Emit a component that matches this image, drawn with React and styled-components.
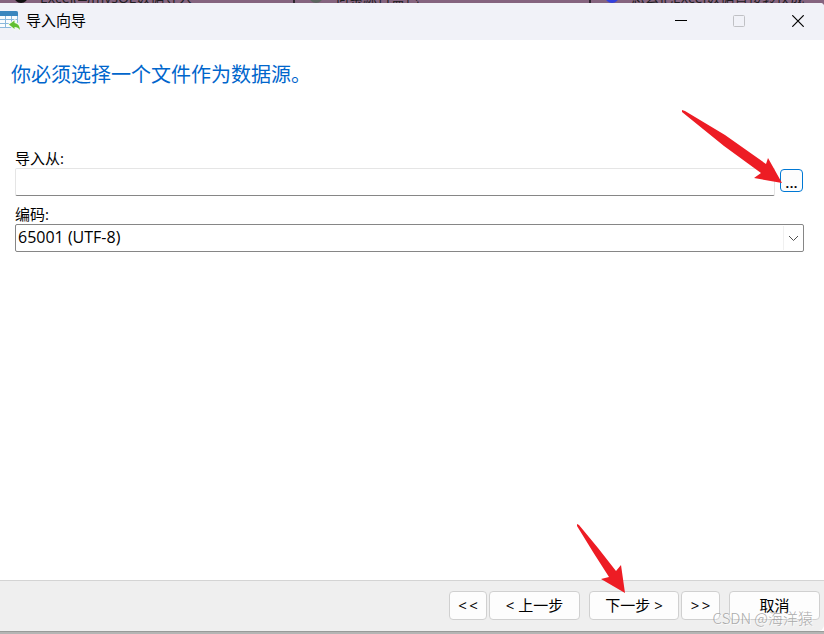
import React, { useState } from 'react';
import styled, { createGlobalStyle } from 'styled-components';

const encodings = ['65001 (UTF-8)', '936 (GBK)', '1200 (UTF-16)', '20127 (US-ASCII)'];

const ImportIcon = () => (
  <svg width="20" height="20" viewBox="0 0 20 20" aria-hidden="true">
    <path d="M0 0h16q2 0 2 2v13q0 2-2 2H0z" fill="#8ab8dc" />
    <path d="M0 0h16q2 0 2 2v3H0z" fill="#3b86be" />
    <path d="M0 5h5v3H0zM6 5h5v3H6zM12 5h5v3h-5zM0 9h5v3H0zM6 9h5v3H6zM12 9h5v3h-5zM0 13h5v3H0zM6 13h5v3H6z" fill="#fafcfe" />
    <path d="M9 13.500L14.500 9.500v2.500q5 0.500 5.500 7-2-3-5.500-3v2z" fill="#62c032" stroke="#f4faf1" strokeWidth="2" paintOrder="stroke" />
  </svg>
);

const ImportWizard = () => {
  const [path, setPath] = useState('');
  const [encoding, setEncoding] = useState(encodings[0]);

  return (
    <S.Page>
      <GlobalStyle />
      <S.TabStrip>
        <S.Tab>
          <S.TabDot $color="#111" />
          Excel(与mysQL数据导入
        </S.Tab>
        <S.Tab>
          <S.TabDot $color="#5d6660" />
          何索綜合藍色
        </S.Tab>
        <S.Tab>
          <S.TabDot $color="#3340dd" />
          怎么把Excel数据直接转换成
        </S.Tab>
      </S.TabStrip>
      <S.Window>
        <S.TitleBar>
          <ImportIcon />
          <S.Title>导入向导</S.Title>
          <S.Control type="button" aria-label="最小化">
            <svg width="12" height="12" viewBox="0 0 12 12">
              <path d="M0 5.500h12" stroke="#000" />
            </svg>
          </S.Control>
          <S.Control type="button" aria-label="最大化" disabled>
            <svg width="12" height="12" viewBox="0 0 12 12">
              <rect x="0.5" y="0.5" width="11" height="11" rx="1" fill="none" stroke="#c0c1c5" />
            </svg>
          </S.Control>
          <S.Control type="button" aria-label="关闭">
            <svg width="12" height="12" viewBox="0 0 12 12">
              <path d="M0.300 0.300l11.400 11.400M11.700 0.300l-11.400 11.400" stroke="#000" strokeWidth="1.200" />
            </svg>
          </S.Control>
        </S.TitleBar>
        <S.Content>
          <S.Heading>你必须选择一个文件作为数据源。</S.Heading>
          <S.Form>
            <S.Label htmlFor="source">导入从:</S.Label>
            <S.FileRow>
              <S.Input id="source" value={path} onChange={(e) => setPath(e.target.value)} />
              <S.Anchor>
                <S.Browse type="button" aria-label="浏览">...</S.Browse>
                <S.BrowseArrow width="104" height="78" viewBox="0 0 104 78" aria-hidden="true">
                  <path d="M2 0L5 1L45 25L86 54L88 48L102 73L74 68L81 63L44 36L2 2z" fill="#ed1c24" />
                </S.BrowseArrow>
              </S.Anchor>
            </S.FileRow>
            <S.Label htmlFor="encoding">编码:</S.Label>
            <S.SelectBox>
              <S.Select id="encoding" value={encoding} onChange={(e) => setEncoding(e.target.value)}>
                {encodings.map((item) => (
                  <option key={item}>{item}</option>
                ))}
              </S.Select>
              <S.Chevron width="20" height="24" viewBox="0 0 20 24" aria-hidden="true">
                <path d="M0.500 0v24" stroke="#f0f0f0" />
                <path d="M6 10l4.500 4.500 4.500-4.500" fill="none" stroke="#505050" />
              </S.Chevron>
            </S.SelectBox>
          </S.Form>
        </S.Content>
        <S.Footer>
          <S.Group>
            <S.Button type="button" $width={38}>&lt;&thinsp;&lt;</S.Button>
            <S.Button type="button" $width={91}>&lt; 上一步</S.Button>
          </S.Group>
          <S.Group>
            <S.Anchor>
              <S.Button type="button" $width={90}>下一步 &gt;</S.Button>
              <S.NextArrow width="52" height="72" viewBox="0 0 52 72" aria-hidden="true">
                <path d="M0 0L2 1L21 24L39 47L44 41L48 69L24 55L32 53L16 28L0 2z" fill="#ed1c24" />
              </S.NextArrow>
            </S.Anchor>
            <S.Button type="button" $width={39}>&gt;&thinsp;&gt;</S.Button>
          </S.Group>
          <S.Button type="button" $width={91}>取消</S.Button>
          <S.Watermark>CSDN @海洋猿</S.Watermark>
        </S.Footer>
      </S.Window>
      <S.Taskbar />
    </S.Page>
  );
};

const GlobalStyle = createGlobalStyle`
  * {
    box-sizing: border-box;
  }

  body {
    margin: 0;
    color: #000;
    font-family: 'Open Sans', 'Noto Sans CJK SC', sans-serif;
    font-size: 15px;
  }

  button,
  input,
  select {
    font: inherit;
    color: inherit;
  }
`;

const S = {
  Page: styled.div`
    display: flex;
    flex-direction: column;
    min-height: 100vh;
    background: #85647f;
  `,
  TabStrip: styled.div`
    display: grid;
    grid-template-columns: 295px 296px 1fr;
    height: 3px;
    overflow: hidden;
    background: #85647f;
  `,
  Tab: styled.div`
    display: flex;
    align-items: flex-end;
    gap: 12px;
    height: 3px;
    padding-left: 14px;
    border-right: 2px solid #302630;
    color: #211d22;
    font-size: 14px;
    line-height: 10px;
    white-space: nowrap;

    &:last-child {
      border-right: 0;
    }
  `,
  TabDot: styled.span`
    width: 14px;
    height: 14px;
    border-radius: 50%;
    background: ${(props) => props.$color};
  `,
  Window: styled.div`
    flex: 1;
    display: flex;
    flex-direction: column;
    background: #fff;
    border-top-right-radius: 4px;
  `,
  TitleBar: styled.header`
    display: flex;
    align-items: center;
    height: 37px;
    padding-bottom: 2px;
    background: #f1f2f8;
    border-top-right-radius: 4px;
  `,
  Title: styled.h1`
    flex: 1;
    margin: 0 0 0 6px;
    font-size: 15px;
    font-weight: 400;
    line-height: 20px;
    padding-bottom: 2px;
  `,
  Control: styled.button`
    display: flex;
    align-items: center;
    justify-content: center;
    width: 58px;
    height: 35px;
    padding: 0;
    border: 0;
    background: none;

    &:last-child {
      width: 52px;
    }

    &:nth-last-child(2) {
      margin-right: 4px;
    }
  `,
  Content: styled.main`
    flex: 1;
    padding: 21px 20px 20px 15px;
  `,
  Heading: styled.h2`
    margin: 0 0 0 -4px;
    color: #0066cc;
    font-size: 20px;
    font-weight: 400;
    line-height: 28px;
  `,
  Form: styled.form`
    display: flex;
    flex-direction: column;
    margin-top: 59px;
  `,
  Label: styled.label`
    line-height: 20px;
  `,
  FileRow: styled.div`
    display: flex;
    align-items: flex-start;
    gap: 5px;
    padding-right: 1px;
    margin-bottom: 8px;
  `,
  Input: styled.input`
    flex: 1;
    min-width: 0;
    height: 28px;
    padding: 0 4px;
    border: 1px solid #e5e5e5;
    border-bottom-color: #868686;
    border-radius: 2px;
    background: #fff;
  `,
  Anchor: styled.div`
    position: relative;
    display: flex;
  `,
  Browse: styled.button`
    width: 23px;
    height: 23px;
    margin-top: 1px;
    padding: 2px 0 0;
    border: 1px solid #0078d4;
    border-radius: 4px;
    background: #fdfdfd;
    font-weight: 600;
    line-height: 18px;
  `,
  BrowseArrow: styled.svg`
    position: absolute;
    right: 19px;
    bottom: 4px;
    pointer-events: none;
  `,
  SelectBox: styled.div`
    position: relative;
  `,
  Select: styled.select`
    display: block;
    width: 100%;
    height: 28px;
    padding: 0 24px 2px 2px;
    appearance: none;
    border: 1px solid #868686;
    border-radius: 2px;
    background: #fff;
    font-size: 16px;
  `,
  Chevron: styled.svg`
    position: absolute;
    top: 2px;
    right: 1px;
    pointer-events: none;
  `,
  Footer: styled.footer`
    position: relative;
    display: flex;
    justify-content: flex-end;
    gap: 9px;
    padding: 10px 4px 11px;
    border-top: 1px solid #d4d4d4;
    background: #efefef;
    border-bottom-right-radius: 6px;
  `,
  Group: styled.div`
    display: flex;
    gap: 2px;
  `,
  Button: styled.button`
    width: ${(props) => props.$width}px;
    height: 29px;
    padding: 0 0 2px;
    border: 1px solid #d0d0d0;
    border-radius: 4px;
    background: #fdfdfd;
    line-height: 20px;
    white-space: nowrap;
  `,
  NextArrow: styled.svg`
    position: absolute;
    right: 50px;
    bottom: 24px;
    pointer-events: none;
  `,
  Watermark: styled.span`
    position: absolute;
    right: 11px;
    bottom: 3px;
    color: rgba(150, 150, 150, 0.8);
    font-family: 'Noto Sans CJK SC', sans-serif;
    font-size: 15px;
    font-weight: 300;
    line-height: 20px;
    text-shadow: 1px 1px 0 rgba(255, 255, 255, 0.7);
    white-space: nowrap;
    pointer-events: none;
  `,
  Taskbar: styled.div`
    height: 3px;
    border-top: 1px solid #999b99;
    background: #b4b5b4;
  `,
};

export default ImportWizard;
